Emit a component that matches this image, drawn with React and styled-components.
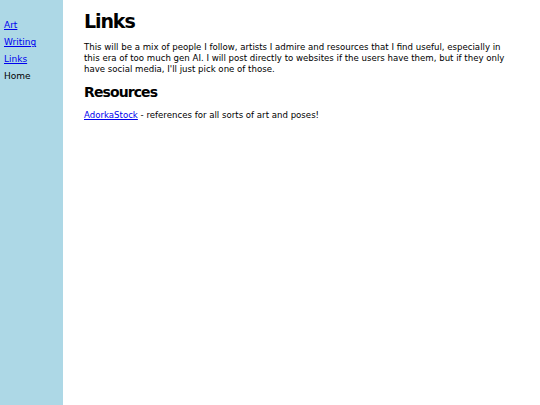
import { createGlobalStyle, styled } from "styled-components";

const GlobalStyle = createGlobalStyle`
  html, body {
    margin: 0;
    padding: 0;
    height: 100%;
    background: #fff;
  }
  #root {
    height: 100%;
  }
`;

function App() {
  return (
    <>
      <GlobalStyle />
      <Page>
        <Sidebar>
          <NavLink href="#">Art</NavLink>
          <NavLink href="#">Writing</NavLink>
          <NavLink href="#">Links</NavLink>
          <NavItem>Home</NavItem>
        </Sidebar>
        <Main>
          <Title>Links</Title>
          <Intro>
            This will be a mix of people I follow, artists I admire and resources
            that I find useful, especially in this era of too much gen AI. I will
            post directly to websites if the users have them, but if they only
            have social media, I'll just pick one of those.
          </Intro>
          <SubTitle>Resources</SubTitle>
          <Entry>
            <a href="#">AdorkaStock</a> - references for all sorts of art and poses!
          </Entry>
        </Main>
      </Page>
    </>
  );
}

export default App;

const Page = styled.div`
  display: flex;
  min-height: 100%;
  height: 405px;
  font-family: "DejaVu Sans", Verdana, sans-serif;
  font-size: 8.6px;
  color: #000;
`;

const Sidebar = styled.nav`
  width: 59px;
  flex-shrink: 0;
  background: #add8e6;
  padding: 19px 0 0 4px;
  display: flex;
  flex-direction: column;
  gap: 5px;
  font-size: 9px;
`;

const NavLink = styled.a`
  color: #0000ee;
  text-decoration: underline;
  line-height: 12px;
`;

const NavItem = styled.span`
  color: #000;
  line-height: 12px;
`;

const Main = styled.main`
  flex: 1;
  padding: 0 28px 0 21px;
`;

const Title = styled.h1`
  font-size: 19px;
  line-height: 22px;
  letter-spacing: -1.1px;
  font-weight: bold;
  margin: 10px 0 9.5px;
`;

const Intro = styled.p`
  margin: 0 0 9.2px;
  line-height: 11px;
`;

const SubTitle = styled.h2`
  font-size: 14px;
  line-height: 17px;
  letter-spacing: -0.9px;
  font-weight: bold;
  margin: 0 0 9.5px;
`;

const Entry = styled.p`
  margin: 0;
  line-height: 11px;
  a {
    color: #0000ee;
  }
`;
